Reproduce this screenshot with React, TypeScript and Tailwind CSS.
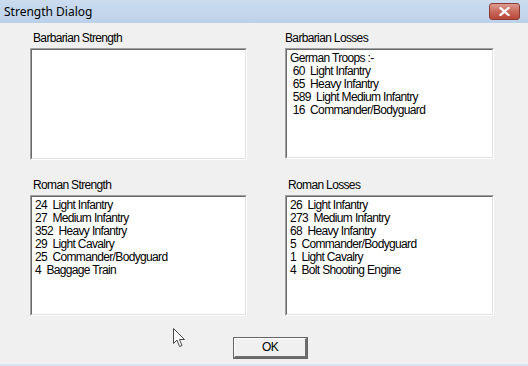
import React from 'react';

type Panel = {
  title: string;
  lines: string[];
};

const topRow: Panel[] = [
  { title: 'Barbarian Strength', lines: [] },
  {
    title: 'Barbarian Losses',
    lines: ['German Troops :-', ' 60  Light Infantry', ' 65  Heavy Infantry', ' 589  Light Medium Infantry', ' 16  Commander/Bodyguard'],
  },
];

const bottomRow: Panel[] = [
  {
    title: 'Roman Strength',
    lines: ['24  Light Infantry', '27  Medium Infantry', '352  Heavy Infantry', '29  Light Cavalry', '25  Commander/Bodyguard', '4  Baggage Train'],
  },
  {
    title: 'Roman Losses',
    lines: ['26  Light Infantry', '273  Medium Infantry', '68  Heavy Infantry', '5  Commander/Bodyguard', '1  Light Cavalry', '4  Bolt Shooting Engine'],
  },
];

const font = "font-['Liberation_Sans',Arial,sans-serif] text-[12px] tracking-[-0.65px] text-black";

const ListBox: React.FC<{ panel: Panel; height: string; labelPad: string }> = ({ panel, height, labelPad }) => (
  <div className="flex flex-col">
    <div className={`${font} leading-[14px] h-[14px] ${labelPad}`}>{panel.title}</div>
    <div className={`mt-[3px] ${height} border-t border-l border-t-[#a0a0a0] border-l-[#a0a0a0] border-b border-r border-b-white border-r-white`}>
      <div className="h-full bg-white border-t border-l border-t-[#696969] border-l-[#696969] border-b border-r border-b-[#e3e3e3] border-r-[#e3e3e3] pt-[2px] pl-[3px]">
        {panel.lines.map((line, i) => (
          <div key={i} className={`${font} leading-[13px] whitespace-pre`}>
            {line}
          </div>
        ))}
      </div>
    </div>
  </div>
);

const App: React.FC = () => {
  return (
    <div className="relative w-[528px] h-[366px] bg-[#f0f0f0] flex flex-col overflow-hidden">
      {/* title bar */}
      <div className="h-[23px] shrink-0 flex items-center justify-between bg-gradient-to-b from-[#cbdcef] to-[#bcd1e9] pl-[4px] pr-[8px]">
        <span className="font-['Noto_Sans',sans-serif] text-[12px] text-black leading-none">Strength Dialog</span>
        <div className="w-[31px] h-[17px] rounded-[3px] border border-[#8b3b32] bg-gradient-to-b from-[#dc9b90] via-[#c9695b] to-[#b8473a] flex items-center justify-center">
          <svg width="11" height="9" viewBox="0 0 11 9">
            <path d="M1.5 1 L9.5 8 M9.5 1 L1.5 8" stroke="#ffffff" strokeWidth="2.2" strokeLinecap="square" />
          </svg>
        </div>
      </div>

      {/* body */}
      <div className="flex-1 pl-[30px] pt-[8px]">
        <div className="grid grid-cols-[217px_209px] gap-x-[38px]">
          <ListBox panel={topRow[0]} height="h-[112px]" labelPad="pl-[3px]" />
          <ListBox panel={topRow[1]} height="h-[111px]" labelPad="pl-0" />
        </div>
        <div className="grid grid-cols-[217px_209px] gap-x-[38px] mt-[18px]">
          <ListBox panel={bottomRow[0]} height="h-[121px]" labelPad="pl-[3px]" />
          <ListBox panel={bottomRow[1]} height="h-[121px]" labelPad="pl-[3px]" />
        </div>
        <div className="mt-[17px] ml-[203px]">
          <button className="w-[75px] h-[22px] border border-[#646464] bg-[#f0f0f0] p-0">
            <div className="h-full border-t border-l border-t-white border-l-white border-b-2 border-r-2 border-b-[#6d6d6d] border-r-[#6d6d6d] flex items-center justify-center">
              <span className={font}>OK</span>
            </div>
          </button>
        </div>
      </div>

      {/* bottom frame edge */}
      <div className="h-[2px] shrink-0 bg-[#dae5f2]" />

      {/* mouse cursor */}
      <svg className="absolute left-[173px] top-[328px]" width="13" height="20" viewBox="0 0 13 20">
        <path d="M0.5 0.5 L0.5 15.5 L4 12 L6.5 18.5 L9 17.5 L6.5 11.5 L11.5 11.5 Z" fill="#ffffff" stroke="#4a4a4a" strokeWidth="1" strokeLinejoin="miter" />
      </svg>
    </div>
  );
};

export default App;
